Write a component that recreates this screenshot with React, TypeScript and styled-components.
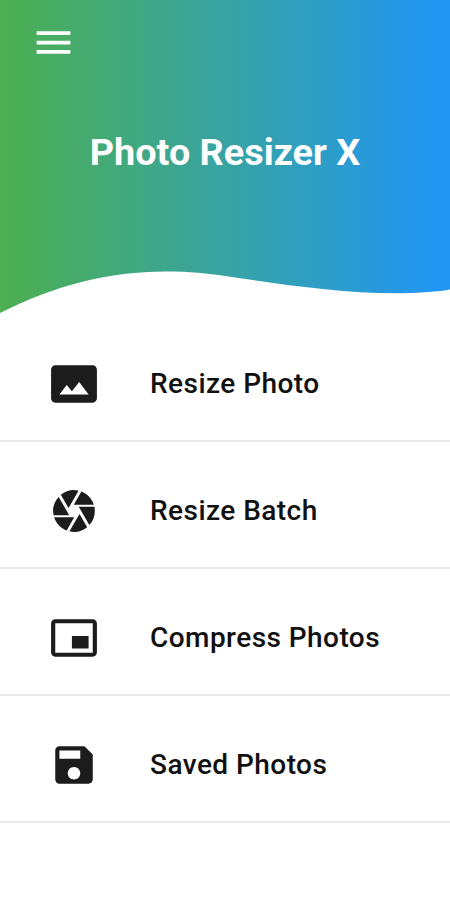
import React from "react";
import styled, { createGlobalStyle } from "styled-components";
import type { IconType } from "react-icons";
import {
  MdCamera,
  MdMenu,
  MdPhotoSizeSelectActual,
  MdPictureInPictureAlt,
  MdSave,
} from "react-icons/md";

const GlobalStyle = createGlobalStyle`
  body {
    margin: 0;
    background: #fff;
    font-family: Roboto, "Liberation Sans", sans-serif;
  }
`;

const Screen = styled.div`
  display: flex;
  flex-direction: column;
  width: 100%;
  height: 900px;
  overflow: hidden;
  background: #fff;
`;

const Header = styled.header`
  display: flex;
  flex-direction: column;
  box-sizing: border-box;
  height: 314px;
  flex: none;
  background: linear-gradient(90deg, #4caf50 0%, #38a3a2 50%, #2196f3 97%);
`;

const MenuButton = styled.button`
  display: flex;
  align-self: flex-start;
  margin: 20px 0 0 31px;
  padding: 0;
  border: 0;
  background: none;
  color: #fff;
  font-size: 45px;
`;

const Title = styled.h1`
  margin: 64px 0 0;
  line-height: 46px;
  font-size: 37.8px;
  font-weight: 700;
  text-align: center;
  color: #fff;
`;

const Wave = styled.svg`
  display: block;
  width: 100%;
  height: 44px;
  margin-top: auto;
`;

const Menu = styled.nav`
  display: flex;
  flex-direction: column;
  padding-top: 1px;
`;

const Item = styled.a`
  display: flex;
  align-items: center;
  gap: 51px;
  box-sizing: border-box;
  height: 127px;
  padding: 13px 0 0 49px;
  border-bottom: 2px solid #e9e9e9;
  color: #1c1c1c;
`;

const ItemIcon = styled.span`
  display: flex;
  width: 50px;
  font-size: 50px;
`;

const Label = styled.span`
  font-size: 28px;
  line-height: 34px;
  font-weight: 500;
  letter-spacing: 0.45px;
  color: #111;
`;

const items: { label: string; icon: IconType }[] = [
  { label: "Resize Photo", icon: MdPhotoSizeSelectActual },
  { label: "Resize Batch", icon: MdCamera },
  { label: "Compress Photos", icon: MdPictureInPictureAlt },
  { label: "Saved Photos", icon: MdSave },
];

export default function App() {
  return (
    <Screen>
      <GlobalStyle />
      <Header>
        <MenuButton aria-label="Menu">
          <MdMenu />
        </MenuButton>
        <Title>Photo Resizer X</Title>
        <Wave viewBox="0 270 450 44" preserveAspectRatio="none" aria-hidden="true">
          <path
            d="M0 313 C55 285 110 271.5 165 271.5 C190 271.5 208 273.5 225 276 C280 284 340 293.3 395 293.3 C415 293.3 435 292 450 289.5 V315 H0 Z"
            fill="#fff"
          />
        </Wave>
      </Header>
      <Menu>
        {items.map(({ label, icon: Icon }) => (
          <Item key={label}>
            <ItemIcon>
              <Icon />
            </ItemIcon>
            <Label>{label}</Label>
          </Item>
        ))}
      </Menu>
    </Screen>
  );
}
